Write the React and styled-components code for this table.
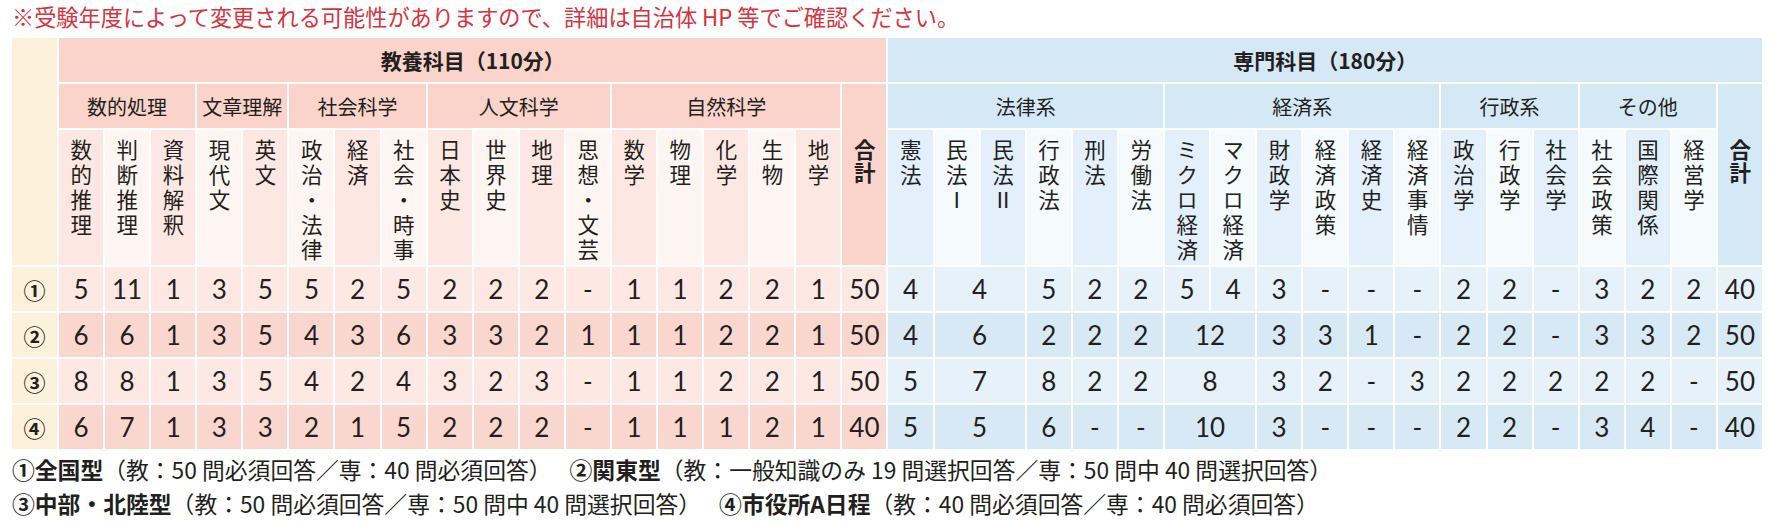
import styled, { createGlobalStyle } from "styled-components";

const GlobalStyle = createGlobalStyle`
  body {
    margin: 0;
    background: #ffffff;
    color: #231f20;
    font-family: "Noto Sans CJK JP", "Noto Sans", sans-serif;
  }
`;

const colors = {
  cream: "#fdf1db",
  pink: {
    head: "#fad4cb",
    colA: "#fde7e2",
    colB: "#fff6f4",
    rowA: "#fde8e4",
    rowB: "#fad7ce",
  },
  blue: {
    head: "#d5e8f6",
    colA: "#e3effa",
    colB: "#f5fafd",
    rowA: "#e7f1fa",
    rowB: "#d8e9f6",
  },
};

const pinkCategories = [
  ["数的処理", 3],
  ["文章理解", 2],
  ["社会科学", 3],
  ["人文科学", 4],
  ["自然科学", 5],
];
const blueCategories = [
  ["法律系", 6],
  ["経済系", 6],
  ["行政系", 3],
  ["その他", 3],
];

const pinkSubjects = [
  "数的推理", "判断推理", "資料解釈", "現代文", "英文", "政治・法律",
  "経済", "社会・時事", "日本史", "世界史", "地理", "思想・文芸",
  "数学", "物理", "化学", "生物", "地学",
];
const blueSubjects = [
  "憲法", "民法Ⅰ", "民法Ⅱ", "行政法", "刑法", "労働法", "ミクロ経済",
  "マクロ経済", "財政学", "経済政策", "経済史", "経済事情", "政治学",
  "行政学", "社会学", "社会政策", "国際関係", "経営学",
];

const rows = [
  {
    label: "①",
    pink: ["5", "11", "1", "3", "5", "5", "2", "5", "2", "2", "2", "-", "1", "1", "2", "2", "1", "50"],
    blue: ["4", ["4", 2], "5", "2", "2", "5", "4", "3", "-", "-", "-", "2", "2", "-", "3", "2", "2", "40"],
  },
  {
    label: "②",
    pink: ["6", "6", "1", "3", "5", "4", "3", "6", "3", "3", "2", "1", "1", "1", "2", "2", "1", "50"],
    blue: ["4", ["6", 2], "2", "2", "2", ["12", 2], "3", "3", "1", "-", "2", "2", "-", "3", "3", "2", "50"],
  },
  {
    label: "③",
    pink: ["8", "8", "1", "3", "5", "4", "2", "4", "3", "2", "3", "-", "1", "1", "2", "2", "1", "50"],
    blue: ["5", ["7", 2], "8", "2", "2", ["8", 2], "3", "2", "-", "3", "2", "2", "2", "2", "2", "-", "50"],
  },
  {
    label: "④",
    pink: ["6", "7", "1", "3", "3", "2", "1", "5", "2", "2", "2", "-", "1", "1", "1", "2", "1", "40"],
    blue: ["5", ["5", 2], "6", "-", "-", ["10", 2], "3", "-", "-", "-", "2", "2", "-", "3", "4", "-", "40"],
  },
];

export default function App() {
  return (
    <Page>
      <GlobalStyle />
      <Note>※受験年度によって変更される可能性がありますので、詳細は自治体 HP 等でご確認ください。</Note>
      <Grid>
        <Corner />
        <GroupTitle $span={18} $tone="pink">教養科目（110分）</GroupTitle>
        <GroupTitle $span={19} $tone="blue">専門科目（180分）</GroupTitle>

        {pinkCategories.map(([name, span]) => (
          <Category key={name} $span={span} $tone="pink">{name}</Category>
        ))}
        <TotalHead $tone="pink"><VText $bold>合計</VText></TotalHead>
        {blueCategories.map(([name, span]) => (
          <Category key={name} $span={span} $tone="blue">{name}</Category>
        ))}
        <TotalHead $tone="blue"><VText $bold>合計</VText></TotalHead>

        {pinkSubjects.map((s, i) => (
          <Subject key={s} $tone="pink" $alt={i % 2 === 1}><VText>{s}</VText></Subject>
        ))}
        {blueSubjects.map((s, i) => (
          <Subject key={s} $tone="blue" $alt={i % 2 === 1}><VText>{s}</VText></Subject>
        ))}

        {rows.map((row, r) => (
          <Row key={row.label} row={row} dark={r % 2 === 1} />
        ))}
      </Grid>
      <Footer>
        <FooterLine>
          <Key>①全国型</Key>（教：50 問必須回答／専：40 問必須回答）
          <Key $gap>②関東型</Key>（教：一般知識のみ 19 問選択回答／専：50 問中 40 問選択回答）
        </FooterLine>
        <FooterLine>
          <Key>③中部・北陸型</Key>（教：50 問必須回答／専：50 問中 40 問選択回答）
          <Key $gap>④市役所A日程</Key>（教：40 問必須回答／専：40 問必須回答）
        </FooterLine>
      </Footer>
    </Page>
  );
}

function Row({ row, dark }) {
  return (
    <>
      <RowLabel>{row.label}</RowLabel>
      {row.pink.map((v, i) => (
        <Value key={"p" + i} $tone="pink" $dark={dark} $span={1}>{v}</Value>
      ))}
      {row.blue.map((v, i) => {
        const [text, span] = Array.isArray(v) ? v : [v, 1];
        return (
          <Value key={"b" + i} $tone="blue" $dark={dark} $span={span}>{text}</Value>
        );
      })}
    </>
  );
}

const Page = styled.div`
  width: 1750px;
  padding: 2px 12px 0;
`;

const Note = styled.p`
  margin: 0;
  color: #d7333d;
  font-size: 22.2px;
  line-height: 28px;
  white-space: nowrap;
`;

const Grid = styled.div`
  display: grid;
  grid-template-columns: 45px repeat(37, 1fr);
  grid-template-rows: 44px 44px 135px repeat(4, 44px);
  gap: 2px;
  margin-top: 8px;
`;

const Corner = styled.div`
  grid-row: span 3;
  background: ${colors.cream};
`;

const GroupTitle = styled.div`
  grid-column: span ${(p) => p.$span};
  background: ${(p) => colors[p.$tone].head};
  display: flex;
  align-items: center;
  justify-content: center;
  font-size: 21px;
  font-weight: 700;
`;

const Category = styled.div`
  grid-column: span ${(p) => p.$span};
  background: ${(p) => colors[p.$tone].head};
  display: flex;
  align-items: center;
  justify-content: center;
  font-size: 20px;
`;

const TotalHead = styled.div`
  grid-row: span 2;
  background: ${(p) => colors[p.$tone].head};
  display: flex;
  justify-content: center;
  padding-top: 55px;
`;

const Subject = styled.div`
  background: ${(p) => (p.$alt ? colors[p.$tone].colB : colors[p.$tone].colA)};
  display: flex;
  justify-content: center;
  padding-top: 9px;
`;

const VText = styled.span`
  writing-mode: vertical-rl;
  text-orientation: upright;
  font-size: 21.5px;
  line-height: 1;
  letter-spacing: ${(p) => (p.$bold ? "2px" : "3.5px")};
  font-weight: ${(p) => (p.$bold ? 700 : 400)};
`;

const RowLabel = styled.div`
  background: ${colors.cream};
  display: flex;
  align-items: center;
  justify-content: center;
  font-size: 22px;
  font-weight: 700;
`;

const Value = styled.div`
  grid-column: span ${(p) => p.$span};
  background: ${(p) => (p.$dark ? colors[p.$tone].rowB : colors[p.$tone].rowA)};
  display: flex;
  align-items: center;
  justify-content: center;
  font-family: "Lato", "Noto Sans", sans-serif;
  font-size: 26px;
`;

const Footer = styled.div`
  margin-top: 4px;
  font-size: 22.8px;
  line-height: 34px;
`;

const FooterLine = styled.p`
  margin: 0;
  white-space: nowrap;
`;

const Key = styled.b`
  font-weight: 700;
  margin-left: ${(p) => (p.$gap ? "18px" : "0")};
`;
